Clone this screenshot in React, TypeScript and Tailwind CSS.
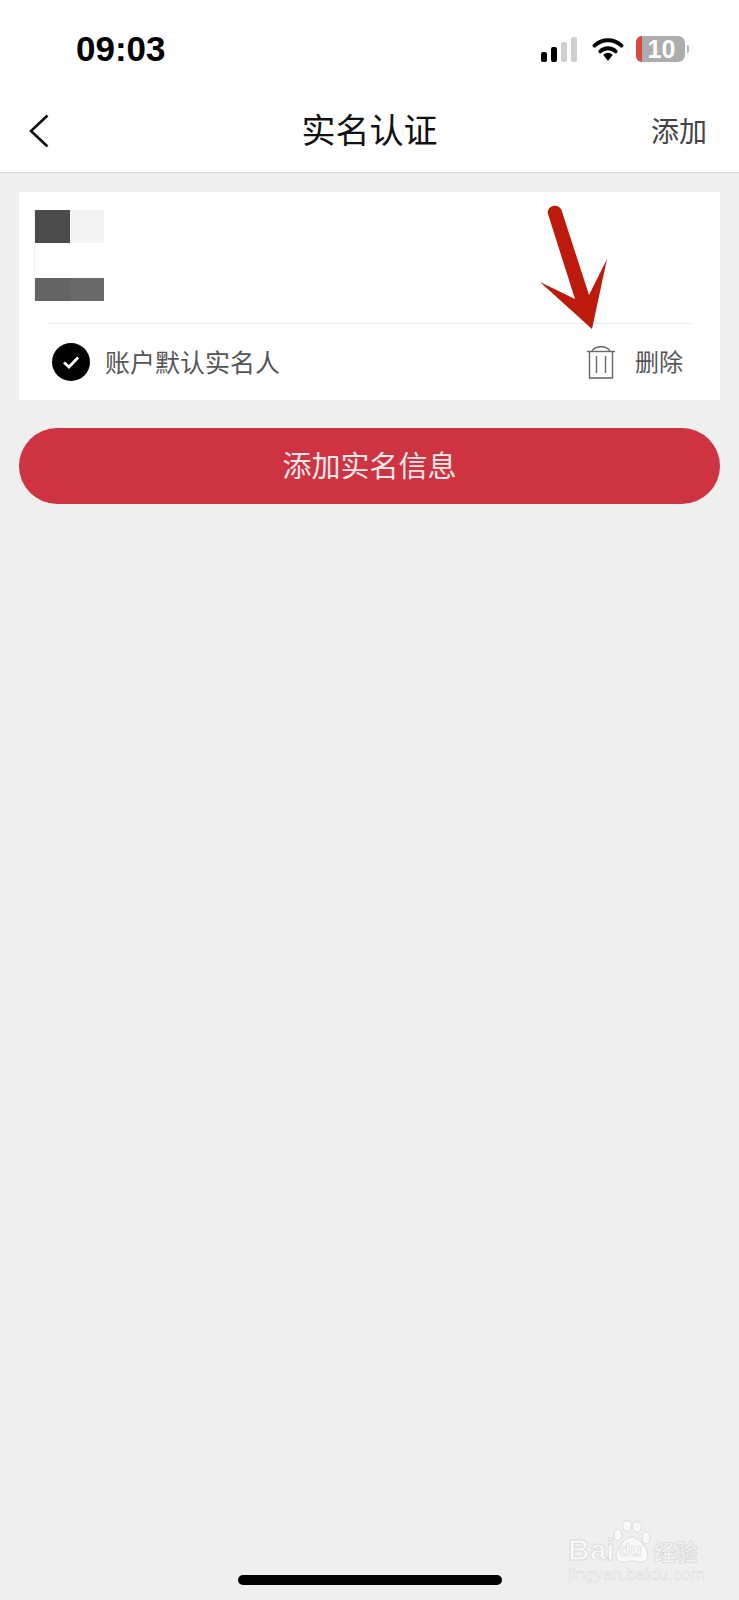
const cjk = { fontFamily: '"Noto Sans CJK SC", "Liberation Sans", sans-serif' };

function Signal() {
  return (
    <svg width="36" height="25" viewBox="0 0 36 25">
      <rect x="0" y="15" width="6" height="10" rx="2" fill="#000" />
      <rect x="10" y="10" width="6" height="15" rx="2" fill="#000" />
      <rect x="20" y="5" width="6" height="20" rx="2" fill="#cfcfcf" />
      <rect x="30" y="0" width="6" height="25" rx="2" fill="#cfcfcf" />
    </svg>
  );
}

function Wifi() {
  return (
    <svg width="32" height="25" viewBox="0 0 32 26" fill="none">
      <path d="M2 9 C10 1.5 22 1.5 30 9" stroke="#000" strokeWidth="4" strokeLinecap="round" />
      <path d="M8 15 C12.5 10.6 19.5 10.6 24 15" stroke="#000" strokeWidth="4" strokeLinecap="round" />
      <path d="M11 18.5 C14 15.5 18 15.5 21 18.5 L16 25 Z" fill="#000" />
    </svg>
  );
}

function Battery() {
  return (
    <div className="flex items-center gap-[2px]">
      <div className="relative flex h-[26px] w-[49px] items-center justify-center rounded-[7px] bg-[#adadad]">
        <div className="absolute inset-y-0 left-0 w-[6px] rounded-l-[7px] bg-[#d9493d]" />
        <span className="pl-[2px] text-[25px] font-bold leading-[26px] text-white" style={{ fontFamily: '"Liberation Sans", sans-serif' }}>
          10
        </span>
      </div>
      <div className="h-[8px] w-[2px] rounded-r-full bg-[#b5b5b5]" />
    </div>
  );
}

function Trash() {
  return (
    <svg width="28" height="33" viewBox="0 0 28 33" fill="none" stroke="#666666" strokeWidth="1.4">
      <path d="M0 5.5 H28" />
      <path d="M5 5 C7 1.8 10 0.8 14 0.8 C18 0.8 21 1.8 23 5" />
      <path d="M2.5 6 V32 H25.5 V6" />
      <path d="M9.5 10 V27" />
      <path d="M18.5 10 V27" />
    </svg>
  );
}

function Arrow() {
  return (
    <svg className="absolute left-[530px] top-[200px]" width="85" height="135" viewBox="530 200 85 135">
      <path
        d="M548 214 C546 206 558 202 561.5 210 L589 295 L607 259 L592 329 L540 282 L575 299 Z"
        fill="#bd1a0e"
      />
    </svg>
  );
}

function Watermark() {
  const stroke = { WebkitTextStroke: '1px #dcdcdc' };
  return (
    <div className="absolute left-[568px] top-[1520px] flex w-[131px] flex-col items-start">
      <div className="flex h-[43px] w-full items-end">
        <span className="text-[30px] font-bold leading-[26px] text-[#f8f8f8]" style={{ fontFamily: '"Liberation Sans", sans-serif', ...stroke }}>
          Bai
        </span>
        <div className="relative -ml-[2px] h-[43px] w-[38px]">
          <svg width="38" height="43" viewBox="0 0 38 43" fill="#f9f9f9" stroke="#dcdcdc" strokeWidth="1">
            <ellipse cx="14" cy="6" rx="4.5" ry="5.5" />
            <ellipse cx="24" cy="7" rx="4.5" ry="5.5" />
            <ellipse cx="5" cy="15" rx="4" ry="5.5" />
            <ellipse cx="33" cy="18" rx="4" ry="6" />
            <path d="M19 17 C26 17 36 29 35 37 C33 44 25 42 19 41 C13 42 5 44 3 37 C2 29 12 17 19 17 Z" />
          </svg>
          <span className="absolute bottom-[3px] left-[6px] text-[19px] font-bold leading-[20px] text-[#f8f8f8]" style={{ fontFamily: '"Liberation Sans", sans-serif', WebkitTextStroke: '0.7px #dcdcdc' }}>
            du
          </span>
        </div>
        <span className="ml-[3px] text-[22px] font-bold leading-[26px] text-[#f8f8f8]" style={{ ...cjk, ...stroke }}>
          经验
        </span>
      </div>
      <span className="mt-[3px] text-[17px] leading-[18px] text-[#f8f8f8]" style={{ fontFamily: '"Liberation Sans", sans-serif', WebkitTextStroke: '0.6px #dcdcdc' }}>
        jingyan.baidu.com
      </span>
    </div>
  );
}

export default function App() {
  return (
    <div className="relative h-[1600px] w-[739px] overflow-hidden bg-[#efefef]" style={cjk}>
      <header className="border-b border-[#d6d6d6] bg-white">
        <div className="flex h-[98px] items-center justify-between pl-[76px] pr-[50px]">
          <span className="pb-[2px] text-[35px] font-bold leading-none text-black" style={{ fontFamily: '"Liberation Sans", sans-serif' }}>
            09:03
          </span>
          <div className="flex items-center">
            <Signal />
            <div className="ml-[15px] mr-[12px]">
              <Wifi />
            </div>
            <Battery />
          </div>
        </div>
        <div className="relative flex h-[74px] items-start justify-center">
          <svg className="absolute left-[29px] top-[16px]" width="20" height="34" viewBox="0 0 20 34" fill="none">
            <path d="M18.5 1.5 L2 17 L18.5 32.5" stroke="#111" strokeWidth="2.6" />
          </svg>
          <span className="mt-[11px] text-[34px] leading-[40px] text-[#111]">实名认证</span>
          <span className="absolute left-[651px] top-[14px] text-[28px] leading-[36px] text-[#444]">添加</span>
        </div>
      </header>

      <main className="flex flex-col px-[19px] pt-[19px]">
        <section className="bg-white">
          <div className="pl-[15px] pt-[18px]">
            <div className="flex w-[70px] flex-col gap-[35px] border-l border-[#f1f1f1]">
              <div className="flex h-[33px] w-[69px]">
                <div className="w-[35px] bg-[#4b4b4b]" />
                <div className="w-[34px] bg-[#f4f4f4]" />
              </div>
              <div className="flex h-[23px] w-[69px]">
                <div className="w-[35px] bg-[#646464]" />
                <div className="w-[34px] bg-[#696969]" />
              </div>
            </div>
          </div>
          <div className="mx-[28px] mt-[22px] border-t border-[#ececec]" />
          <div className="flex h-[76px] items-center justify-between pl-[33px] pr-[37px]">
            <div className="flex items-center gap-[15px]">
              <div className="flex h-[38px] w-[38px] items-center justify-center rounded-full bg-black">
                <svg width="18" height="14" viewBox="0 0 18 14" fill="none">
                  <path d="M2 7.5 L7 12 L16 2.5" stroke="#fff" strokeWidth="2.8" />
                </svg>
              </div>
              <span className="pb-[2px] text-[25px] leading-[32px] text-[#555]">账户默认实名人</span>
            </div>
            <div className="flex items-center gap-[20px]">
              <Trash />
              <span className="pb-[2px] text-[24px] leading-[32px] text-[#555]">删除</span>
            </div>
          </div>
        </section>

        <button className="mt-[28px] flex h-[76px] items-center justify-center rounded-full bg-[#cd3340] pb-[2px] text-[29px] text-[#f7e9ea]">
          添加实名信息
        </button>
      </main>

      <Arrow />
      <div className="absolute bottom-[15px] left-[238px] h-[10px] w-[264px] rounded-full bg-black" />
      <Watermark />
    </div>
  );
}
